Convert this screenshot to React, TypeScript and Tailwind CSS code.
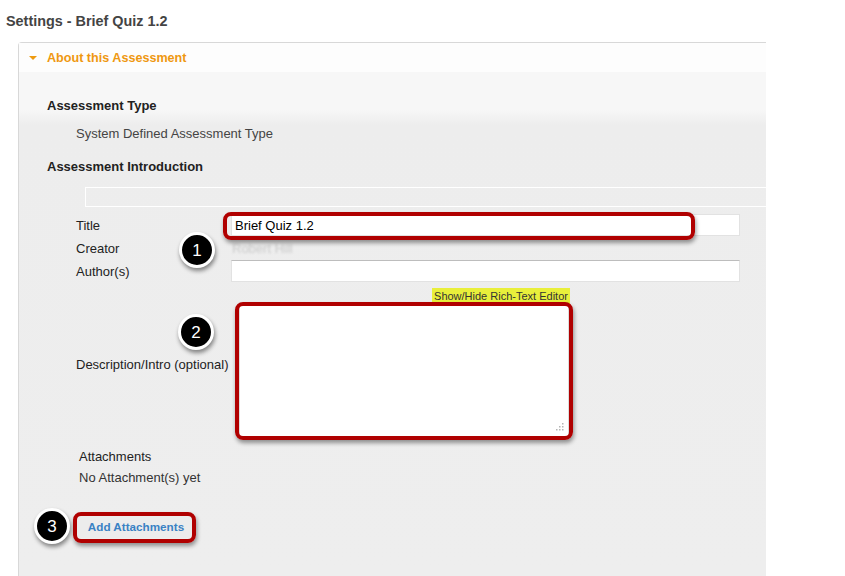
import React from 'react';

const Badge = ({ n, className }: { n: string; className: string }) => (
  <div
    className={`absolute w-[36px] h-[36px] rounded-full bg-black border-[3px] border-white shadow-[1px_3px_4px_rgba(0,0,0,0.45)] flex items-center justify-center text-white text-[17px] ${className}`}
  >
    {n}
  </div>
);

const Grip = () => (
  <svg width="10" height="10" viewBox="0 0 10 10" className="absolute right-[4px] bottom-[4px]">
    {[
      [8, 1],
      [5, 4],
      [8, 4],
      [2, 7],
      [5, 7],
      [8, 7],
    ].map(([x, y], i) => (
      <rect key={i} x={x} y={y} width="1.5" height="1.5" fill="#b5b5b5" />
    ))}
  </svg>
);

const App = () => {
  return (
    <div className="w-[845px] h-[576px] bg-white overflow-hidden font-['Liberation_Sans',Arial,sans-serif] text-[#333]">
      <h1 className="pl-[6px] h-[42px] flex items-center text-[14.4px] leading-none font-bold text-[#444]">Settings - Brief Quiz 1.2</h1>

      <div className="ml-[18px] w-[748px] h-[534px] border-t border-l border-[#d8d8d8] rounded-tl-[4px] flex flex-col">
        {/* header */}
        <div className="h-[29px] bg-[#fdfdfd] flex items-center pl-[10px]">
          <span className="w-0 h-0 border-l-[4px] border-r-[4px] border-t-[4px] border-l-transparent border-r-transparent border-t-[#ee9a0f] mr-[10px]"></span>
          <span className="text-[12.6px] font-bold text-[#ef9811] pt-[2px]">About this Assessment</span>
        </div>

        {/* body */}
        <div className="relative flex-1 bg-[linear-gradient(to_bottom,#f7f7f7_0px,#f7f7f7_38px,#ededed_53px,#eeeeee_100%)] text-[13px] leading-none">
          <div className="ml-[28px] mt-[22px] h-[22px] flex items-center font-bold text-[#222]">Assessment Type</div>
          <div className="ml-[57px] mt-[6px] h-[22px] flex items-center text-[#444]">System Defined Assessment Type</div>
          <div className="ml-[28px] mt-[11px] h-[22px] flex items-center font-bold text-[#222]">Assessment Introduction</div>
          <div className="ml-[66px] mt-[10px] h-[20px] border border-white border-r-0"></div>

          {/* form */}
          <div className="ml-[57px] text-[#222]">
            <div className="mt-[7px] flex items-center h-[22px]">
              <span className="w-[155px]">Title</span>
              <div className="w-[509px] h-[22px] bg-white border border-[#e2e2e2] pl-[3px] flex items-center text-black">
                Brief Quiz 1.2
              </div>
            </div>
            <div className="mt-[1px] flex items-center h-[22px]">
              <span className="w-[156px]">Creator</span>
              <span className="text-[#cacaca] blur-[1px]">Robert Hill</span>
            </div>
            <div className="mt-[1px] flex items-center h-[22px]">
              <span className="w-[155px]">Author(s)</span>
              <div className="w-[509px] h-[22px] bg-white border border-[#e2e2e2] border-t-[#bdbdbd]"></div>
            </div>
            <div className="ml-[356px] mt-[6px] w-[138px] h-[16px] bg-[#e9ef3b] text-[11px] whitespace-nowrap text-[#333] flex items-center justify-center">
              Show/Hide Rich-Text Editor
            </div>
            <div className="mt-[1px] flex items-center h-[132px]">
              <span className="w-[163px] mb-[14px]">Description/Intro (optional)</span>
              <div className="relative w-[330px] h-[132px] bg-white border border-[#ddd]">
                <Grip />
              </div>
            </div>
            <div className="ml-[3px] mt-[9px] h-[20px] flex items-center text-[#222]">Attachments</div>
            <div className="ml-[3px] mt-[1px] h-[20px] flex items-center text-[#333]">No Attachment(s) yet</div>
            <div className="mt-[28px] ml-[1px] w-[118px] h-[23px] bg-[#ececec] rounded-[3px] flex items-center justify-center text-[11.7px] font-bold text-[#3a82c4]">
              Add Attachments
            </div>
          </div>

          {/* annotations */}
          <div className="absolute left-[204px] top-[140px] w-[472px] h-[28px] border-4 border-[#b00000] rounded-[8px] shadow-[1px_3px_4px_rgba(0,0,0,0.4)]"></div>
          <div className="absolute left-[216px] top-[230px] w-[338px] h-[138px] border-4 border-[#b00000] rounded-[8px] shadow-[1px_3px_4px_rgba(0,0,0,0.4)]"></div>
          <div className="absolute left-[54px] top-[440px] w-[123px] h-[31px] border-4 border-[#b00000] rounded-[8px] shadow-[1px_3px_4px_rgba(0,0,0,0.4)]"></div>
          <Badge n="1" className="left-[160px] top-[160px]" />
          <Badge n="2" className="left-[159px] top-[242px]" />
          <Badge n="3" className="left-[15px] top-[436px]" />
        </div>
      </div>
    </div>
  );
};

export default App;
